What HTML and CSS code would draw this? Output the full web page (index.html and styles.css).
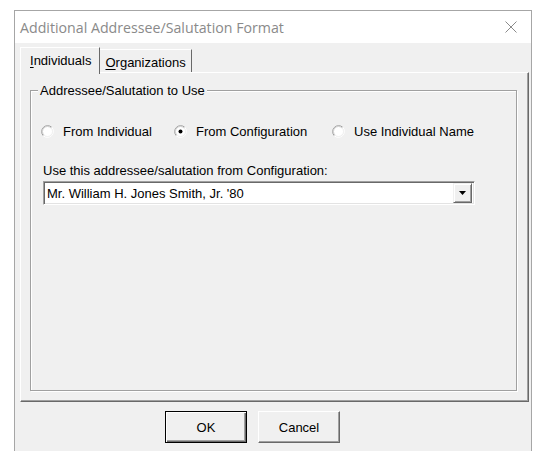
FILE: index.html
```html
<!DOCTYPE html>
<html>
<head>
<meta charset="utf-8">
<link rel="stylesheet" href="styles.css">
</head>
<body>
<div class="window">
  <div class="titlebar">
    <span class="title">Additional Addressee/Salutation Format</span>
    <svg class="close" width="12" height="12" viewBox="0 0 12 12"><path d="M0.5 0.5 L11.5 11.5 M11.5 0.5 L0.5 11.5" stroke="#8a8a8a" stroke-width="1" fill="none"/></svg>
  </div>
  <div class="body">
    <div class="tabs">
      <div class="tab active"><span><u>I</u>ndividuals</span></div>
      <div class="tab"><span><u>O</u>rganizations</span></div>
    </div>
    <div class="panel">
      <fieldset class="group">
        <legend>Addressee/Salutation to Use</legend>
        <div class="radios">
          <div class="radio">
            <svg width="13" height="13" viewBox="0 0 13 13"><circle cx="6.5" cy="6.5" r="5" fill="#fff"/><path d="M10.74 2.26 A6 6 0 0 0 2.26 10.74" stroke="#a0a0a0" fill="none"/><path d="M2.26 10.74 A6 6 0 0 0 10.74 2.26" stroke="#fff" fill="none"/><path d="M10.04 2.96 A5 5 0 0 0 2.96 10.04" stroke="#d0d0d0" fill="none"/><path d="M2.96 10.04 A5 5 0 0 0 10.04 2.96" stroke="#f0f0f0" fill="none"/></svg>
            <span>From Individual</span>
          </div>
          <div class="radio">
            <svg width="13" height="13" viewBox="0 0 13 13"><circle cx="6.5" cy="6.5" r="5" fill="#fff"/><path d="M10.74 2.26 A6 6 0 0 0 2.26 10.74" stroke="#a0a0a0" fill="none"/><path d="M2.26 10.74 A6 6 0 0 0 10.74 2.26" stroke="#fff" fill="none"/><path d="M10.04 2.96 A5 5 0 0 0 2.96 10.04" stroke="#d0d0d0" fill="none"/><path d="M2.96 10.04 A5 5 0 0 0 10.04 2.96" stroke="#f0f0f0" fill="none"/><circle cx="6.5" cy="6.5" r="2" fill="#000"/></svg>
            <span>From Configuration</span>
          </div>
          <div class="radio">
            <svg width="13" height="13" viewBox="0 0 13 13"><circle cx="6.5" cy="6.5" r="5" fill="#fff"/><path d="M10.74 2.26 A6 6 0 0 0 2.26 10.74" stroke="#a0a0a0" fill="none"/><path d="M2.26 10.74 A6 6 0 0 0 10.74 2.26" stroke="#fff" fill="none"/><path d="M10.04 2.96 A5 5 0 0 0 2.96 10.04" stroke="#d0d0d0" fill="none"/><path d="M2.96 10.04 A5 5 0 0 0 10.04 2.96" stroke="#f0f0f0" fill="none"/></svg>
            <span>Use Individual Name</span>
          </div>
        </div>
        <div class="combo-label">Use this addressee/salutation from Configuration:</div>
        <div class="combo">
          <span class="combo-text">Mr. William H. Jones Smith, Jr. '80</span>
          <div class="combo-btn"><svg width="7" height="4" viewBox="0 0 7 4"><polygon points="0,0 7,0 3.5,4" fill="#000"/></svg></div>
        </div>
      </fieldset>
    </div>
    <div class="buttons">
      <div class="btn default">OK</div>
      <div class="btn">Cancel</div>
    </div>
  </div>
</div>
</body>
</html>
```

FILE: styles.css
```css
* { box-sizing: border-box; }
body {
  margin: 0;
  background: #fff;
  font-family: "Liberation Sans", Arial, sans-serif;
  font-size: 13px;
  color: #000;
}
.window {
  margin: 10px 0 0 14px;
  width: 518px;
  height: 441px;
  border: 1px solid #a6a6a6;
  border-bottom: none;
  display: flex;
  flex-direction: column;
}
.titlebar {
  height: 32px;
  background: #fff;
  display: flex;
  align-items: center;
  justify-content: space-between;
  padding: 0 14px 0 5px;
}
.title {
  font-family: "Open Sans", "Noto Sans", sans-serif;
  font-size: 14.2px;
  color: #8a8a8a;
}
.close { display: block; }
.body {
  flex: 1;
  background: #f0f0f0;
  padding: 4px 2px 0 5px;
  display: flex;
  flex-direction: column;
}
.tabs {
  display: flex;
  align-items: flex-end;
  height: 25px;
  position: relative;
  z-index: 1;
}
.tab {
  height: 23px;
  display: flex;
  align-items: center;
  padding: 0 5px 0 5px;
  border-top: 1px solid #fff;
  border-right: 1px solid #696969;
  line-height: 15px;
  padding-top: 2px;
}
.tab.active {
  height: 27px;
  margin-bottom: -2px;
  background: #f0f0f0;
  border-left: 1px solid #fff;
  padding: 0 8px 2px 9px;
}
.tab u { text-decoration-thickness: 1px; text-underline-offset: 2px; }
.panel {
  height: 330px;
  border: 1px solid;
  border-color: #fff #696969 #696969 #fff;
  box-shadow: inset -1px -1px 0 #a0a0a0;
  padding: 10px 11px 10px 9px;
  display: flex;
  flex-direction: column;
}
.group {
  flex: 1;
  margin: 0;
  min-width: 0;
  padding: 0 12px;
  border: 1px solid #a0a0a0;
  box-shadow: inset 1px 1px 0 #fff, 1px 1px 0 #fff;
}
.group legend {
  margin-left: -5px;
  padding: 0 2px;
  line-height: 15px;
  background: #f0f0f0;
}
.radios {
  display: grid;
  grid-template-columns: 133px 158px auto;
  margin: 26px 0 0 -2px;
  line-height: 15px;
}
.radio {
  display: flex;
  align-items: center;
  gap: 9px;
}
.radio svg { display: block; flex: none; }
.combo-label {
  margin-top: 24px;
  line-height: 15px;
}
.combo {
  margin-top: 3px;
  width: 432px;
  height: 24px;
  border: 1px solid;
  border-color: #a0a0a0 #fff #fff #a0a0a0;
  box-shadow: inset 1px 1px 0 #696969, inset -1px -1px 0 #e3e3e3;
  background: #fff;
  display: flex;
  align-items: center;
  justify-content: space-between;
  padding: 1px 2px 1px 3px;
}
.combo-text { line-height: 15px; }
.combo-btn {
  width: 19px;
  height: 20px;
  background: #f0f0f0;
  border: 1px solid;
  border-color: #f0f0f0 #696969 #696969 #f0f0f0;
  box-shadow: inset 1px 1px 0 #fff, inset -1px -1px 0 #a0a0a0;
  display: flex;
  align-items: center;
  justify-content: center;
}
.combo-btn svg { display: block; }
.buttons {
  display: flex;
  gap: 11px;
  padding: 9px 0 0 145px;
}
.btn {
  width: 82px;
  height: 32px;
  display: flex;
  align-items: center;
  justify-content: center;
  border: 1px solid;
  border-color: #fff #696969 #696969 #fff;
  box-shadow: inset -1px -1px 0 #a0a0a0;
  background: #f0f0f0;
}
.btn.default {
  border: 1px solid #000;
  box-shadow: inset 1px 1px 0 #fff, inset -1px -1px 0 #696969, inset -2px -2px 0 #a0a0a0;
}
```
